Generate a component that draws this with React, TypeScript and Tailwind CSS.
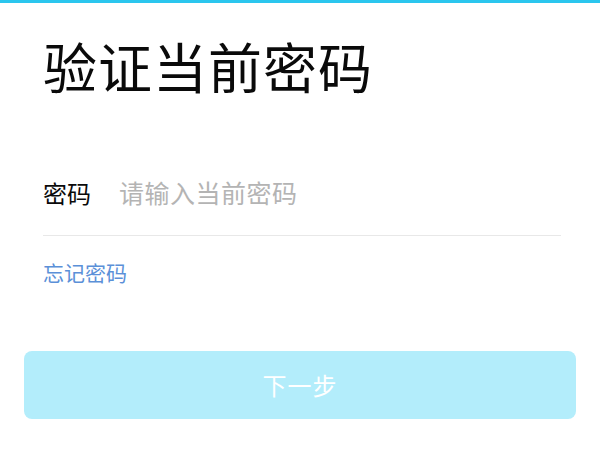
import React from 'react';

const VerifyPassword = () => {
  return (
    <div
      className="w-[600px] h-[450px] bg-white flex flex-col overflow-hidden"
      style={{ fontFamily: '"Noto Sans CJK SC", "Noto Sans", sans-serif' }}
    >
      <div className="h-[3px] bg-[#2ac6ee]" />

      <div className="px-[43px]">
        <h1 className="mt-[26px] text-[54px] leading-[74px] font-normal text-[#0a0a0a] tracking-[1px]">
          验证当前密码
        </h1>

        {/* Password row */}
        <div className="mt-[72px] flex items-center h-[36px]">
          <span className="text-[24px] text-[#0a0a0a] w-[76px]">密码</span>
          <span className="text-[25px] text-[#b4b4b4] tracking-[0.5px]">请输入当前密码</span>
        </div>
        <div className="mt-[24px] -mr-[4px] h-px bg-[#e8e8e8]" />

        <div className="mt-[21px] text-[21px] leading-[30px] text-[#5b90d8]">忘记密码</div>
      </div>

      {/* Next button */}
      <div className="px-[24px] mt-[64px]">
        <button className="w-full h-[68px] rounded-[8px] bg-[#b3edfb] text-white text-[24px] tracking-[1px] flex items-center justify-center">
          下一步
        </button>
      </div>
    </div>
  );
};

export default function App() {
  return <VerifyPassword />;
}
